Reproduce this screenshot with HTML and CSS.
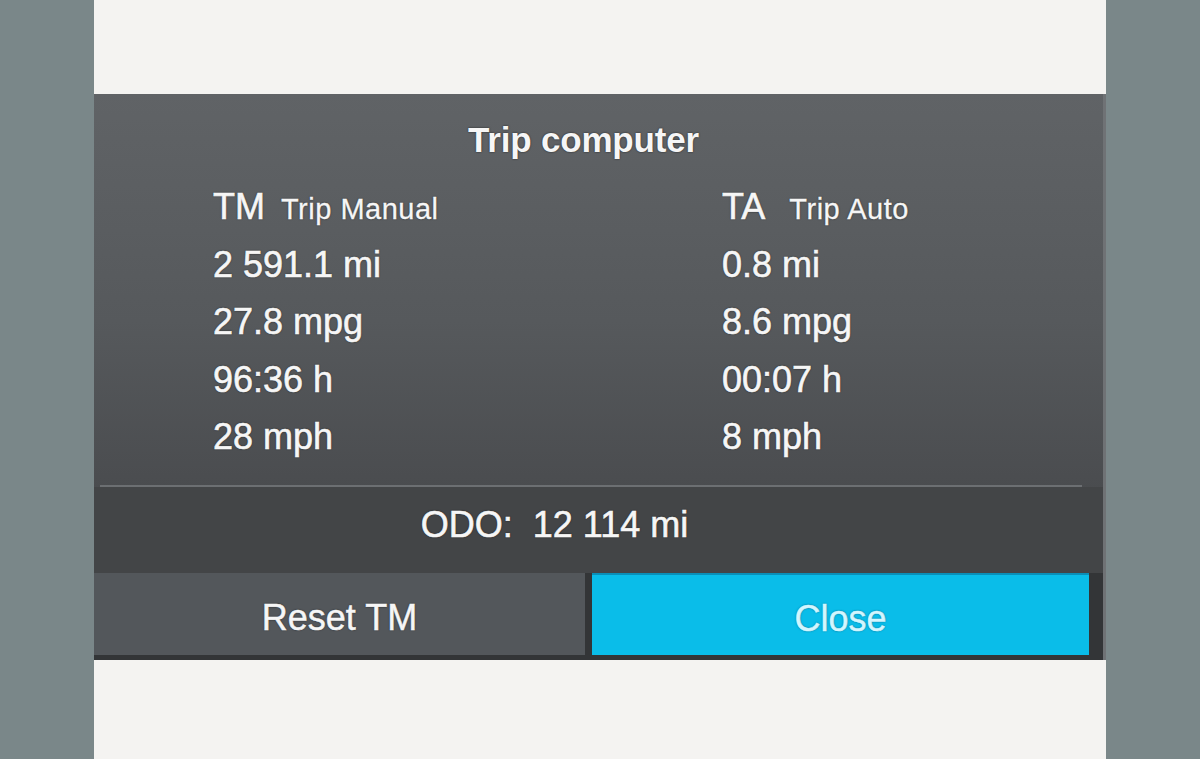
FILE: index.html
```html
<html>
<head>
<title>Trip computer</title>
<link rel="stylesheet" href="styles.css">
</head>
<body>
<div class="page">
  <div class="white top"></div>
  <div class="panel">
    <h1 class="title">Trip computer</h1>
    <div class="trips">
      <div class="trip">
        <div class="head"><span class="code">TM</span><span class="name tm">Trip Manual</span></div>
        <div class="val">2 591.1 mi</div>
        <div class="val">27.8 mpg</div>
        <div class="val">96:36 h</div>
        <div class="val">28 mph</div>
      </div>
      <div class="trip">
        <div class="head"><span class="code">TA</span><span class="name ta">Trip Auto</span></div>
        <div class="val">0.8 mi</div>
        <div class="val">8.6 mpg</div>
        <div class="val">00:07 h</div>
        <div class="val">8 mph</div>
      </div>
    </div>
    <div class="rule"></div>
    <div class="odo">ODO:&nbsp; 12 114 mi</div>
    <div class="buttons">
      <div class="btn reset">Reset TM</div>
      <div class="btn close">Close</div>
    </div>
  </div>
  <div class="white bottom"></div>
</div>
</body>
</html>
```

FILE: styles.css
```css
body {
  margin: 0;
  background-color: #7a8789;
  font-family: "Liberation Sans", Arial, sans-serif;
  color: #f6f6f6;
}
.page {
  width: 1012px;
  height: 759px;
  margin: 0 auto;
  display: flex;
  flex-direction: column;
}
.white {
  background-color: #f4f3f1;
}
.top {
  height: 94px;
}
.bottom {
  flex: 1;
}
.panel {
  height: 566px;
  display: flex;
  flex-direction: column;
  background: linear-gradient(180deg, #606366 0%, #56595c 40%, #4a4c4f 70%, #424446 100%);
  border-right: 3px solid #6f7275;
  box-sizing: border-box;
  text-shadow: 0 0 2px rgba(0, 0, 0, 0.7);
}
.title {
  margin: 0;
  padding: 23px 30px 0 0;
  height: 46px;
  line-height: 46px;
  font-size: 35px;
  font-weight: bold;
  text-align: center;
  letter-spacing: -0.2px;
}
.trips {
  display: grid;
  grid-template-columns: 509px 1fr;
  padding-left: 119px;
  margin-top: 15px;
}
.trip div {
  height: 57.5px;
  line-height: 57.5px;
  font-size: 36px;
  white-space: nowrap;
  -webkit-text-stroke: 0.6px #f6f6f6;
}
.head .name {
  font-size: 29px;
  letter-spacing: 0.5px;
  -webkit-text-stroke: 0.3px #f6f6f6;
}
.name.tm {
  margin-left: 16px;
}
.name.ta {
  margin-left: 24px;
}
.rule {
  height: 2px;
  background-color: #6c6f72;
  margin: 19px 21px 0 6px;
}
.odo {
  height: 86px;
  line-height: 76px;
  padding-right: 88px;
  text-align: center;
  font-size: 36px;
  background-color: #434547;
  -webkit-text-stroke: 0.6px #f6f6f6;
}
.buttons {
  display: flex;
  gap: 7px;
  height: 87px;
  padding: 0 14px 5px 0;
  box-sizing: border-box;
  background-color: #333537;
}
.btn {
  display: flex;
  align-items: center;
  justify-content: center;
  font-size: 36px;
  padding-top: 8px;
}
.reset {
  width: 491px;
  background-color: #53575b;
  -webkit-text-stroke: 0.5px #f6f6f6;
}
.close {
  flex: 1;
  background-color: #0abde9;
  color: #d2f6ff;
  border-top: 2px solid #0a8fb8;
  text-shadow: 0 0 2px rgba(0, 60, 90, 0.8);
  -webkit-text-stroke: 0.5px #d2f6ff;
}
```
